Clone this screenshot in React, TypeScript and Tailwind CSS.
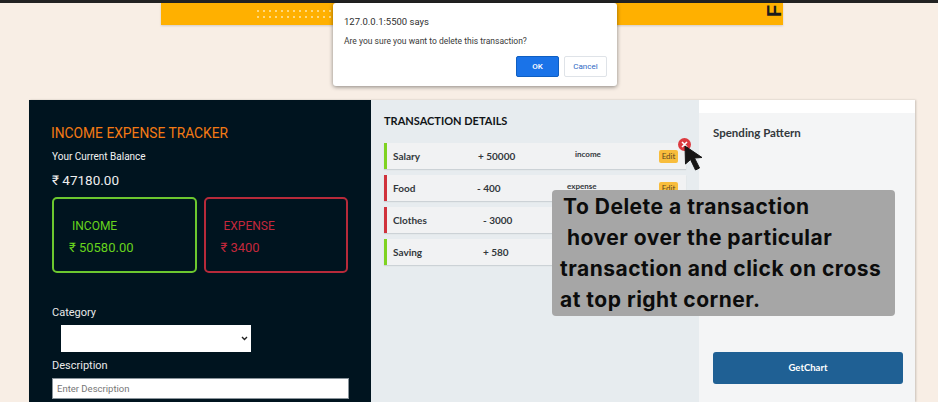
import React from "react";

type Row = {
  name: string;
  amount: string;
  kind?: string;
  income: boolean;
  nameWidth: string;
  amountWidth: string;
  kindClass: string;
  edit: boolean;
};

const rows: Row[] = [
  { name: "Salary", amount: "+ 50000", kind: "income", income: true, nameWidth: "w-[85px]", amountWidth: "w-[97px]", kindClass: "-mt-[5px]", edit: true },
  { name: "Food", amount: "- 400", kind: "expense", income: false, nameWidth: "w-[84px]", amountWidth: "w-[90px]", kindClass: "-mt-[5px]", edit: true },
  { name: "Clothes", amount: "- 3000", income: false, nameWidth: "w-[90px]", amountWidth: "w-[90px]", kindClass: "", edit: false },
  { name: "Saving", amount: "+ 580", income: true, nameWidth: "w-[90px]", amountWidth: "w-[90px]", kindClass: "", edit: false },
];

function TransactionRow({ row }: { row: Row }) {
  return (
    <div
      className={`flex h-[26px] w-[302px] items-center border-l-[3px] bg-[#f1f2f3] pl-[6px] pr-[8px] shadow-[0_1px_1px_#ccd2d6] ${
        row.income ? "border-[#7ed321]" : "border-[#d0323c]"
      }`}
    >
      <span className={`${row.nameWidth} text-[10px] font-bold text-[#33383c]`}>{row.name}</span>
      <span className={`${row.amountWidth} text-[10px] font-bold text-[#33383c]`}>{row.amount}</span>
      {row.kind && <span className={`text-[8px] font-bold text-[#33383c] ${row.kindClass}`}>{row.kind}</span>}
      {row.edit && (
        <span className="ml-auto flex h-[13px] w-[19px] items-center justify-center rounded-[2px] bg-[#f8bd3c] text-[8px] text-[#5b4a22]">
          Edit
        </span>
      )}
    </div>
  );
}

function AlertDialog() {
  return (
    <div className="absolute left-[333px] top-[3px] h-[83px] w-[284px] rounded-[3px] bg-white pl-[11px] pr-[10px] pt-[12px] font-['Roboto',sans-serif] shadow-[0_1px_4px_rgba(0,0,0,0.45)]">
      <p className="text-[9.5px] leading-[13px] text-[#2f2f2f]">127.0.0.1:5500 says</p>
      <p className="mt-[7px] text-[8.5px] leading-[12px] text-[#3a3a3a]">Are you sure you want to delete this transaction?</p>
      <div className="mt-[9px] flex justify-end gap-[5px]">
        <span className="flex h-[21px] w-[43px] items-center justify-center rounded-[2px] border border-[#0f5fc2] bg-[#1a73e8] text-[8px] font-medium text-white">
          OK
        </span>
        <span className="flex h-[21px] w-[43px] items-center justify-center rounded-[2px] border border-[#dfe3e8] bg-white text-[8px] text-[#2f69c4]">
          Cancel
        </span>
      </div>
    </div>
  );
}

function HintBox() {
  return (
    <div className="absolute left-[552px] top-[190px] h-[126px] w-[343px] rounded-[4px] bg-[#a6a6a6] pl-[8px] pt-[1px] font-['Inter','Open_Sans',sans-serif] text-[21px] font-bold leading-[31px] tracking-[0.5px] text-[#0c0c0c]">
      <p className="pl-[3px]">To Delete a transaction</p>
      <p className="pl-[7px]">hover over the particular</p>
      <p>transaction and click on cross</p>
      <p>at top right corner.</p>
    </div>
  );
}

function DeleteCursor() {
  return (
    <>
      <span className="absolute left-[678px] top-[138px] flex h-[13px] w-[13px] items-center justify-center rounded-full bg-[#dc3a3f]">
        <svg width="7" height="7" viewBox="0 0 7 7">
          <path d="M1 1l5 5M6 1L1 6" stroke="#fff" strokeWidth="1.6" />
        </svg>
      </span>
      <svg className="absolute left-[684px] top-[145px]" width="22" height="27" viewBox="0 0 22 27">
        <path d="M1 1l0.5 18 5-4.5 5 10.5 4-2-5-10 7.5-0.5z" fill="#161616" stroke="#161616" strokeWidth="1" />
      </svg>
    </>
  );
}

export default function App() {
  return (
    <div className="relative h-[402px] w-[938px] overflow-hidden bg-[#f8eee5] font-['Lato','Noto_Sans',sans-serif]">
      <div className="h-[3px] w-full bg-[#222222]" />
      <div className="ml-[161px] flex h-[22px] w-[622px] items-start justify-end overflow-hidden bg-[#ffb000] pr-[3px] shadow-[0_1px_2px_rgba(0,0,0,0.15)]">
        <div className="ml-[96px] mr-auto mt-[7px] grid grid-cols-[repeat(14,4px)] gap-x-[2px] gap-y-[4px]">
          {Array.from({ length: 28 }).map((_, i) => (
            <span key={i} className="h-[2px] w-[2px] rounded-full bg-[#ffe7a8]" />
          ))}
        </div>
        <span className="-mt-[2px] -rotate-90 font-['Liberation_Sans',sans-serif] text-[20px] font-bold leading-[20px] text-[#1c1c1c]">F</span>
      </div>

      <div className="ml-[29px] mt-[75px] flex h-[302px] w-[886px] shadow-[1px_0_2px_rgba(0,0,0,0.2)]">
        <section className="w-[342px] bg-[#00141f] px-[23px] pt-[24px] font-['Roboto',sans-serif]">
          <h1 className="-ml-[1px] text-[13.8px] leading-[18px] text-[#f47a14]">INCOME EXPENSE TRACKER</h1>
          <p className="mt-[8px] text-[10px] leading-[14px] text-[#f2f2f2]">Your Current Balance</p>
          <p className="mt-[6px] text-[13.5px] leading-[20px] text-[#eeeeee]">₹ 47180.00</p>
          <div className="mt-[7px] flex gap-[7px]">
            <div className="h-[76px] w-[145px] rounded-[5px] border-2 border-[#6cc72f] pl-[18px] pt-[19px] text-[#67d31d]">
              <p className="text-[12px] leading-[16px]">INCOME</p>
              <p className="-ml-[3px] mt-[5px] text-[13px] leading-[18px]">₹ 50580.00</p>
            </div>
            <div className="h-[76px] w-[145px] rounded-[5px] border-2 border-[#b72a3a] pl-[18px] pt-[19px] text-[#c4283c]">
              <p className="text-[12px] leading-[16px]">EXPENSE</p>
              <p className="-ml-[3px] mt-[5px] text-[13px] leading-[18px]">₹ 3400</p>
            </div>
          </div>
          <label className="mt-[32px] block text-[11px] leading-[16px] text-[#e9e9e9]">Category</label>
          <div className="ml-[9px] mt-[4px] flex h-[27px] w-[190px] items-center justify-end bg-white pr-[3px]">
            <svg width="7" height="5" viewBox="0 0 7 5">
              <path d="M1 1l2.5 2.5L6 1" fill="none" stroke="#222" strokeWidth="1.4" />
            </svg>
          </div>
          <label className="mt-[6px] block text-[11px] leading-[16px] text-[#e9e9e9]">Description</label>
          <input
            readOnly
            placeholder="Enter Description"
            className="mt-[4px] h-[21px] w-[297px] border border-[#8a949b] bg-white px-[4px] text-[9.5px] placeholder:text-[#777777]"
          />
        </section>

        <section className="w-[328px] bg-[#e7ecef] pl-[13px] pt-[13px]">
          <h2 className="text-[11px] font-bold leading-[16px] text-[#111417]">TRANSACTION DETAILS</h2>
          <div className="mt-[14px] flex flex-col gap-[6px]">
            {rows.map((row) => (
              <TransactionRow key={row.name} row={row} />
            ))}
          </div>
        </section>

        <section className="flex w-[216px] flex-col bg-[#f4f5f6]">
          <div className="h-[13px] bg-white" />
          <h2 className="ml-[14px] mt-[12px] text-[11.5px] font-bold leading-[16px] text-[#33383c]">Spending Pattern</h2>
          <button className="ml-[14px] mt-[211px] h-[32px] w-[190px] rounded-[3px] bg-[#1f6094] text-[9.5px] font-bold text-white">
            GetChart
          </button>
        </section>
      </div>

      <AlertDialog />
      <DeleteCursor />
      <HintBox />
    </div>
  );
}
